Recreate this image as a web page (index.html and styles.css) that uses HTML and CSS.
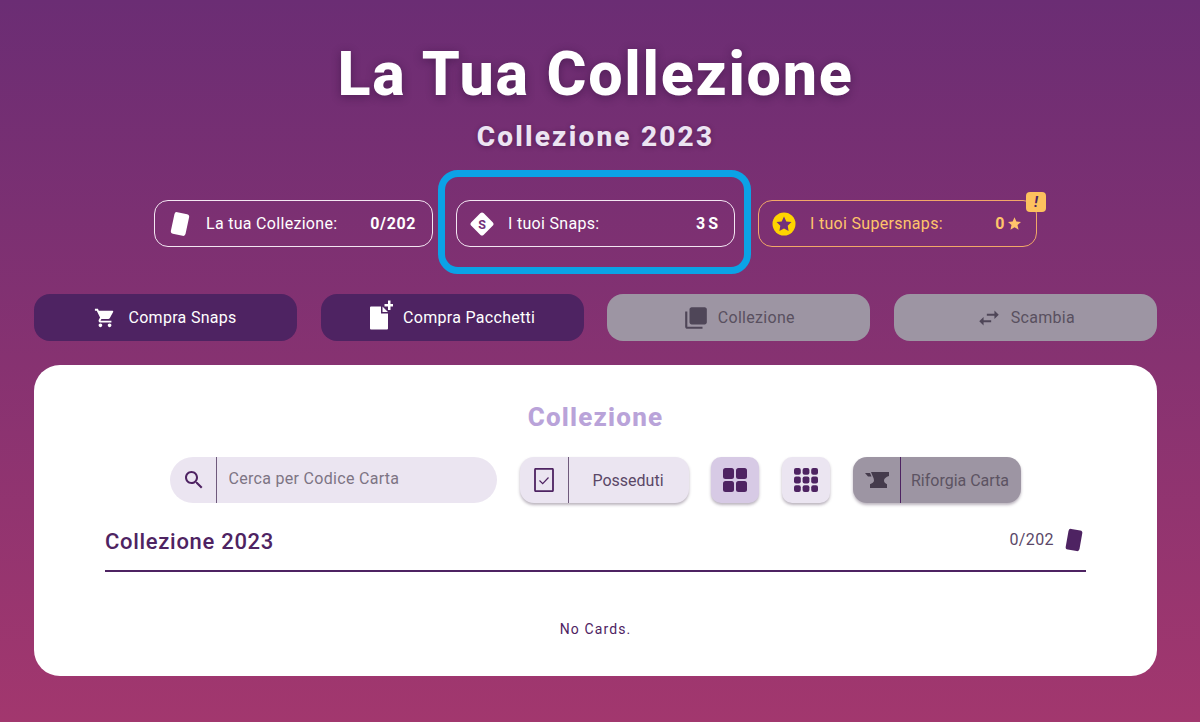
FILE: index.html
```html
<!DOCTYPE html>
<html lang="it">
<head>
    <meta charset="UTF-8">
    <meta name="viewport" content="width=device-width, initial-scale=1.0">
    <title>La Tua Collezione</title>
    <link rel="stylesheet" href="styles.css">
</head>
<body>
    <header class="hero">
        <h1>La Tua Collezione</h1>
        <h2>Collezione 2023</h2>
    </header>

    <div class="stats">
        <div class="stat">
            <svg class="stat-icon" viewBox="0 0 24 24"><rect x="4.500" y="1" width="15" height="22" rx="2.500" fill="#fff" transform="rotate(12 12 12)"/></svg>
            <span class="stat-label">La tua Collezione:</span>
            <span class="stat-value">0/202</span>
        </div>
        <div class="stat stat-marked">
            <svg class="stat-icon" viewBox="0 0 24 24"><rect x="3.200" y="3.200" width="17.600" height="17.600" rx="2.500" fill="#fff" transform="rotate(45 12 12)"/><text x="12" y="16.500" class="snap-letter">S</text></svg>
            <span class="stat-label">I tuoi Snaps:</span>
            <span class="stat-value stat-snaps">3 S</span>
        </div>
        <div class="stat stat-gold">
            <svg class="stat-icon" viewBox="0 0 24 24"><circle cx="12" cy="12" r="11.500" fill="#ffd400"/><path d="M12 4.600l2.300 4.800 5.200.7-3.800 3.600.9 5.200-4.600-2.500-4.600 2.500.9-5.200-3.800-3.600 5.200-.7z" fill="#71307a"/></svg>
            <span class="stat-label">I tuoi Supersnaps:</span>
            <span class="stat-value">0<svg class="mini-star" viewBox="0 0 24 24"><path d="M12 2l3 6.900 7.400.7-5.600 4.900 1.700 7.300L12 17.900l-6.500 3.900 1.700-7.300L1.600 9.600 9 8.900z" fill="#ffc46b"/></svg></span>
            <span class="stat-badge">!</span>
        </div>
    </div>

    <nav class="actions">
        <button class="action">
            <svg viewBox="0 0 24 24"><path d="M7 18c-1.100 0-1.990.9-1.990 2S5.900 22 7 22s2-.9 2-2-.9-2-2-2zM1 2v2h2l3.600 7.590-1.350 2.450c-.16.28-.25.61-.25.96 0 1.100.9 2 2 2h12v-2H7.420c-.14 0-.25-.11-.25-.25l.03-.12.9-1.630h7.450c.75 0 1.410-.41 1.750-1.030l3.580-6.490c.08-.14.12-.31.12-.48 0-.55-.45-1-1-1H5.210l-.94-2H1zm16 16c-1.100 0-1.990.9-1.990 2s.89 2 1.990 2 2-.9 2-2-.9-2-2-2z"/></svg>
            Compra Snaps
        </button>
        <button class="action">
            <svg class="pack-icon" viewBox="0 0 24 30"><path d="M2 6h10v7h7v15a1 1 0 0 1-1 1H2a1 1 0 0 1-1-1V7a1 1 0 0 1 1-1zM13.500 6l5.500 5.500h-5.500zM19 0h2.500v3.500H25V6h-3.500v3.500H19V6h-3.500V3.500H19z"/></svg>
            Compra Pacchetti
        </button>
        <button class="action action-off">
            <svg class="icon-big" viewBox="0 0 24 24"><path d="M4 6H2v14c0 1.100.9 2 2 2h14v-2H4V6zm16-4H8c-1.100 0-2 .9-2 2v12c0 1.100.9 2 2 2h12c1.100 0 2-.9 2-2V4c0-1.100-.9-2-2-2z"/></svg>
            Collezione
        </button>
        <button class="action action-off">
            <svg class="icon-big" viewBox="0 0 24 24"><path d="M6.990 11 3 15l3.990 4v-3H14v-2H6.990v-3zM21 9l-3.990-4v3H10v2h7.010v3L21 9z"/></svg>
            Scambia
        </button>
    </nav>

    <main class="panel">
        <h3 class="panel-title">Collezione</h3>

        <div class="toolbar">
            <div class="search">
                <span class="cell-icon cell-search">
                    <svg viewBox="0 0 24 24"><path d="M15.500 14h-.79l-.28-.27C15.410 12.590 16 11.110 16 9.500 16 5.910 13.090 3 9.500 3S3 5.910 3 9.500 5.910 16 9.500 16c1.610 0 3.090-.59 4.230-1.570l.27.28v.79l5 4.990L20.490 19l-4.990-5zm-6 0C7.010 14 5 11.990 5 9.500S7.010 5 9.500 5 14 7.010 14 9.500 11.990 14 9.500 14z"/></svg>
                </span>
                <input type="text" placeholder="Cerca per Codice Carta">
            </div>
            <button class="tool tool-owned">
                <span class="cell-icon">
                    <svg viewBox="0 0 24 24"><rect x="3" y=".8" width="18" height="22.400" rx="1" fill="none" stroke="#4e2362" stroke-width="1.800"/><path d="M7.500 12.500l3.200 3.200 5.800-6.200" fill="none" stroke="#4e2362" stroke-width="1.200"/></svg>
                </span>
                <span class="tool-text">Posseduti</span>
            </button>
            <button class="square square-on">
                <svg viewBox="0 0 24 24" class="grid-big"><rect x="0" y="0" width="11" height="11" rx="2.500"/><rect x="13" y="0" width="11" height="11" rx="2.500"/><rect x="0" y="13" width="11" height="11" rx="2.500"/><rect x="13" y="13" width="11" height="11" rx="2.500"/></svg>
            </button>
            <button class="square">
                <svg viewBox="0 0 24 24" class="grid-big"><rect x="0" y="0" width="6.800" height="6.800" rx="2"/><rect x="8.600" y="0" width="6.800" height="6.800" rx="2"/><rect x="17.200" y="0" width="6.800" height="6.800" rx="2"/><rect x="0" y="8.600" width="6.800" height="6.800" rx="2"/><rect x="8.600" y="8.600" width="6.800" height="6.800" rx="2"/><rect x="17.200" y="8.600" width="6.800" height="6.800" rx="2"/><rect x="0" y="17.200" width="6.800" height="6.800" rx="2"/><rect x="8.600" y="17.200" width="6.800" height="6.800" rx="2"/><rect x="17.200" y="17.200" width="6.800" height="6.800" rx="2"/></svg>
            </button>
            <button class="tool tool-forge">
                <span class="cell-icon">
                    <svg viewBox="0 0 24 24"><path d="M0 5h5l1.500 3.500H3zM6 4h18v4c-3 1-5 2.500-5 4.500 0 1.800 1.300 3 3 3.700V20H5v-3.800c2-.7 4-1.900 4-3.700 0-2.500-1.800-5-3-8.500z" fill="#453b4c"/></svg>
                </span>
                <span class="tool-text">Riforgia Carta</span>
            </button>
        </div>

        <section class="set">
            <div class="set-head">
                <h4>Collezione 2023</h4>
                <span class="set-count">0/202
                    <svg viewBox="0 0 24 24"><rect x="5" y="1.500" width="14" height="21" rx="2.500" fill="#4e2362" transform="rotate(10 12 12)"/></svg>
                </span>
            </div>
            <p class="empty">No Cards.</p>
        </section>
    </main>
</body>
</html>
```

FILE: styles.css
```css
* {
    box-sizing: border-box;
}
html, body {
    height: 100%;
}
body {
    margin: 0;
    padding: 0 43px 0 34px;
    overflow: hidden;
    font-family: 'Roboto', sans-serif;
    background: linear-gradient(to bottom, #6b2d74, #a2376e);
    color: #fff;
}
.hero {
    text-align: center;
    padding-top: 38px;
}
h1 {
    margin: 0;
    font-family: 'Roboto', sans-serif;
    font-size: 61px;
    line-height: 72px;
    font-weight: 800;
    letter-spacing: 1.700px;
    text-shadow: 0 2px 10px rgba(40, 10, 50, 0.45);
}
h2 {
    margin: 9px 0 0;
    font-family: 'Roboto', sans-serif;
    font-size: 28px;
    line-height: 36px;
    font-weight: 800;
    letter-spacing: 2.200px;
    color: #ece4f2;
    text-shadow: 0 1px 5px rgba(40, 10, 50, 0.4);
}
.stats {
    display: flex;
    justify-content: center;
    gap: 23px;
    margin-top: 45px;
}
.stat {
    position: relative;
    display: flex;
    align-items: center;
    width: 279px;
    height: 47px;
    padding: 0 16px 0 13px;
    border: 1px solid #f3e6f2;
    border-radius: 14px;
    font-size: 16px;
}
.stat-icon {
    width: 24px;
    height: 24px;
    flex: none;
}
.stat-label {
    margin-left: 14px;
    letter-spacing: 0.300px;
}
.stat-value {
    display: flex;
    align-items: center;
    margin-left: auto;
    font-weight: 700;
    letter-spacing: 0.600px;
}
.stat-snaps {
    letter-spacing: 1px;
    word-spacing: -3px;
}
.snap-letter {
    font-family: 'Roboto', sans-serif;
    font-size: 12.500px;
    font-weight: 700;
    text-anchor: middle;
    fill: #71307a;
}
.stat-marked {
    padding-right: 15px;
}
.stat-marked::after {
    content: "";
    position: absolute;
    top: -31px;
    left: -19px;
    right: -17px;
    bottom: -28px;
    border: 7px solid #0ba2e6;
    border-radius: 20px;
}
.stat-gold {
    border-color: #f2a868;
    color: #ffc46b;
    padding-right: 14px;
}
.mini-star {
    width: 15px;
    height: 15px;
    margin-left: 2px;
}
.stat-badge {
    position: absolute;
    top: -9px;
    right: -10px;
    width: 20px;
    height: 20px;
    background: #fdc15e;
    border-radius: 4px;
    color: #4e2362;
    font-size: 15px;
    font-weight: 700;
    font-style: italic;
    line-height: 20px;
    text-align: center;
}
.actions {
    display: grid;
    grid-template-columns: repeat(4, 1fr);
    gap: 23.500px;
    margin-top: 47px;
}
.action {
    display: flex;
    align-items: center;
    justify-content: center;
    gap: 12px;
    height: 47px;
    border: none;
    border-radius: 16px;
    background: #4e2362;
    color: #fff;
    font-family: 'Roboto', sans-serif;
    font-size: 16px;
    letter-spacing: 0.300px;
}
.action svg {
    width: 22px;
    height: 22px;
    fill: #fff;
}
.action .pack-icon {
    width: 24px;
    height: 31px;
    margin-top: -4px;
    margin-right: -2px;
}
.action .icon-big {
    width: 26px;
    height: 26px;
    margin-right: -3px;
}
.action-off {
    background: #9d95a3;
    color: #59505f;
}
.action-off svg {
    fill: #4f4658;
}
.panel {
    margin-top: 24px;
    height: 311px;
    padding: 32px 71px 0;
    background: #fff;
    border-radius: 26px;
    color: #4e2362;
}
.panel-title {
    margin: 0;
    font-family: 'Roboto', sans-serif;
    font-size: 26px;
    line-height: 40px;
    font-weight: 800;
    letter-spacing: 1.200px;
    text-align: center;
    color: #b9a3d9;
}
.toolbar {
    display: flex;
    justify-content: center;
    gap: 23px;
    margin-top: 20px;
}
.search, .tool {
    display: flex;
    align-items: stretch;
    height: 46px;
    padding: 0;
    border: none;
    background: #ebe5f1;
    font-family: 'Roboto', sans-serif;
    font-size: 16px;
}
.search {
    width: 327px;
    border-radius: 23px;
    letter-spacing: 0.300px;
}
.search input {
    flex: 1;
    min-width: 0;
    border: none;
    outline: none;
    background: none;
    padding: 0 12px 4px 11.500px;
    font-family: inherit;
    font-size: inherit;
    letter-spacing: inherit;
}
.search input::placeholder {
    color: #7d7484;
    opacity: 1;
}
.cell-icon {
    display: flex;
    align-items: center;
    justify-content: center;
    width: 47px;
    flex: none;
    border-right: 1px solid #6f5a7c;
}
.cell-search {
    padding-left: 2px;
}
.cell-icon svg {
    width: 24px;
    height: 24px;
    fill: #4e2362;
}
.tool {
    border-radius: 14px;
    box-shadow: 0 2px 3px rgba(60, 40, 70, 0.35);
    color: #5a4767;
}
.tool-owned {
    width: 169px;
    margin-right: -1px;
}
.tool-owned .cell-icon {
    width: 49px;
}
.tool-text {
    flex: 1;
    align-self: center;
    text-align: center;
    padding-right: 2px;
}
.tool-forge {
    width: 168px;
    background: #9d95a3;
    color: #5c5362;
}
.tool-forge .cell-icon {
    width: 48px;
    border-right-color: #4e2362;
}
.square {
    display: flex;
    align-items: center;
    justify-content: center;
    width: 48px;
    height: 46px;
    padding: 0;
    border: none;
    border-radius: 10px;
    background: #ebe5f1;
    box-shadow: 0 2px 3px rgba(60, 40, 70, 0.35);
}
.square-on {
    background: #d7cae5;
}
.grid-big {
    width: 24px;
    height: 24px;
    fill: #4e2362;
}
.set-head {
    display: flex;
    align-items: center;
    justify-content: space-between;
    height: 69px;
    border-bottom: 2px solid #4e2362;
}
.set-head h4 {
    margin: 9px 0 0;
    font-family: 'Roboto', sans-serif;
    font-size: 22px;
    font-weight: 500;
    letter-spacing: 0.700px;
}
.set-count {
    display: flex;
    align-items: center;
    gap: 8px;
    margin-top: 6px;
    font-size: 16px;
    letter-spacing: 0.400px;
    color: #5a4767;
}
.set-count svg {
    width: 24px;
    height: 24px;
}
.empty {
    margin: 47px 0 0;
    font-size: 14px;
    line-height: 20px;
    letter-spacing: 1.100px;
    text-align: center;
}
```
